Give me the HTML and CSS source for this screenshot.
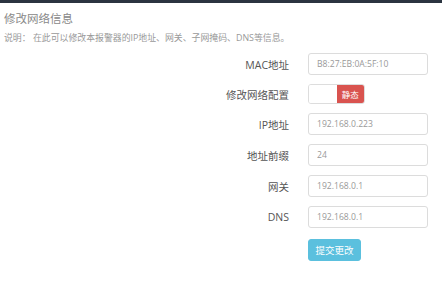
FILE: index.html
```html
<!DOCTYPE html>
<html lang="zh-CN">
<head>
    <meta charset="UTF-8">
    <meta name="viewport" content="width=device-width, initial-scale=1.0">
    <title>修改网络信息</title>
    <link rel="stylesheet" href="styles.css">
</head>
<body>
    <div class="topbar"></div>
    <div class="page">
        <h3 class="title">修改网络信息</h3>
        <p class="desc">说明：&nbsp;在此可以修改本报警器的IP地址、网关、子网掩码、DNS等信息。</p>

        <form class="net-form">
            <label class="field-label">MAC地址</label>
            <input class="field-input" type="text" value="B8:27:EB:0A:5F:10" readonly>

            <label class="field-label">修改网络配置</label>
            <div class="toggle">
                <span class="toggle-off"></span>
                <span class="toggle-on">静态</span>
            </div>

            <label class="field-label">IP地址</label>
            <input class="field-input" type="text" value="192.168.0.223">

            <label class="field-label">地址前缀</label>
            <input class="field-input" type="text" value="24">

            <label class="field-label">网关</label>
            <input class="field-input" type="text" value="192.168.0.1">

            <label class="field-label">DNS</label>
            <input class="field-input" type="text" value="192.168.0.1">

            <span></span>
            <div><button class="btn-submit" type="button">提交更改</button></div>
        </form>
    </div>
</body>
</html>
```

FILE: styles.css
```css
* { box-sizing: border-box; margin: 0; padding: 0; }
body {
    font-family: "Open Sans", "Noto Sans CJK SC", sans-serif;
    background: #fff;
    color: #333;
}
.topbar {
    height: 3px;
    background: #2b3440;
}
.page {
    padding: 0 4px;
}
.title {
    font-size: 11.5px;
    font-weight: 400;
    color: #888;
    line-height: 16px;
    margin-top: 8px;
}
.desc {
    font-size: 8.9px;
    color: #999;
    line-height: 12px;
    margin-top: 5px;
}
.net-form {
    display: grid;
    grid-template-columns: 285px 120px;
    column-gap: 19px;
    row-gap: 9px;
    align-items: center;
    margin-top: 9px;
}
.field-label {
    text-align: right;
    font-size: 10.5px;
    color: #555;
}
.field-input {
    height: 22px;
    width: 120px;
    border: 1px solid #dcdcdc;
    border-radius: 3px;
    padding: 0 8px;
    font-family: inherit;
    font-size: 8.6px;
    color: #999;
    background: #fff;
    outline: none;
}
.toggle {
    display: flex;
    width: 57px;
    height: 20px;
    border: 1px solid #ddd;
    border-radius: 3px;
    overflow: hidden;
}
.toggle-off {
    flex: 1;
    background: #fff;
}
.toggle-on {
    flex: 1;
    background: #d9534f;
    color: #fff;
    font-size: 8.5px;
    display: flex;
    align-items: center;
    justify-content: center;
}
.btn-submit {
    margin-top: 1px;
    width: 53px;
    height: 22px;
    background: #5bc0de;
    border: 1px solid #5bc0de;
    border-radius: 3px;
    color: #fff;
    font-family: inherit;
    font-size: 9.5px;
    cursor: pointer;
}
```
